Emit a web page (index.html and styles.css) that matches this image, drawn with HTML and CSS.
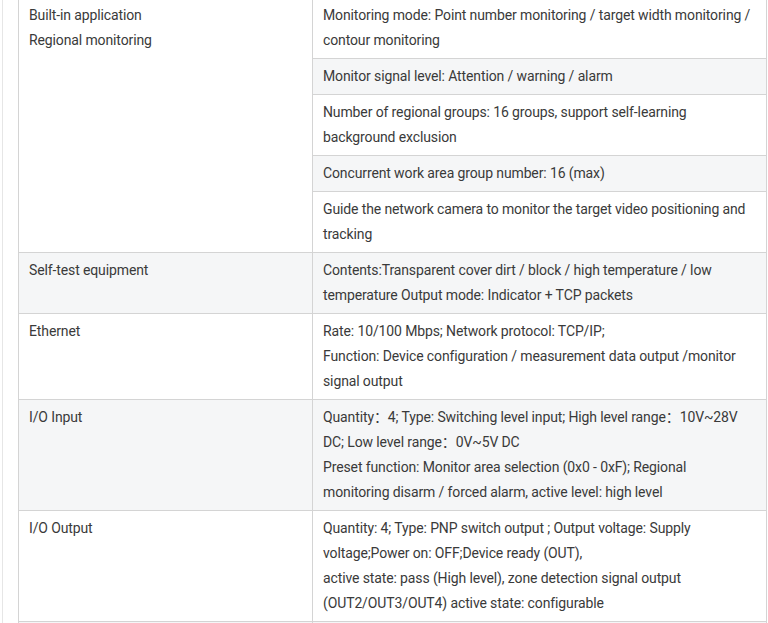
FILE: index.html
```html
<!DOCTYPE html>
<html>
<head>
<meta charset="utf-8">
<link rel="stylesheet" href="styles.css">
</head>
<body>
<div class="page">
  <table class="spec">
    <colgroup><col class="c1"><col class="c2"></colgroup>
    <tbody>
      <tr>
        <td rowspan="5">Built-in application<br>Regional monitoring</td>
        <td>Monitoring mode: Point number monitoring / target width monitoring / contour monitoring</td>
      </tr>
      <tr class="alt"><td>Monitor signal level: Attention / warning / alarm</td></tr>
      <tr><td>Number of regional groups: 16 groups, support self-learning background exclusion</td></tr>
      <tr class="alt"><td>Concurrent work area group number: 16 (max)</td></tr>
      <tr><td>Guide the network camera to monitor the target video positioning and tracking</td></tr>
      <tr class="alt">
        <td>Self-test equipment</td>
        <td>Contents:Transparent cover dirt / block / high temperature / low temperature Output mode: Indicator + TCP packets</td>
      </tr>
      <tr>
        <td>Ethernet</td>
        <td>Rate: 10/100 Mbps; Network protocol: TCP/IP;<br>Function: Device configuration / measurement data output /monitor signal output</td>
      </tr>
      <tr class="alt">
        <td>I/O Input</td>
        <td>Quantity：4; Type: Switching level input; High level range：10V~28V DC; Low level range：0V~5V DC<br>Preset function: Monitor area selection (0x0 - 0xF); Regional monitoring disarm / forced alarm, active level: high level</td>
      </tr>
      <tr>
        <td>I/O Output</td>
        <td>Quantity: 4; Type: PNP switch output ; Output voltage: Supply voltage;Power on: OFF;Device ready (OUT),<br>active state: pass (High level), zone detection signal output (OUT2/OUT3/OUT4) active state: configurable</td>
      </tr>
      <tr class="alt empty">
        <td></td>
        <td></td>
      </tr>
    </tbody>
  </table>
</div>
</body>
</html>
```
FILE: styles.css
```css
html, body {
  margin: 0;
  padding: 0;
  background: #ffffff;
  overflow: hidden;
}
.page {
  margin-left: 2px;
  border-left: 1px solid #e6e6e6;
  padding-left: 15px;
  height: 623px;
  overflow: hidden;
}
.spec {
  margin-top: -3px;
  border-collapse: collapse;
  table-layout: fixed;
  width: 749px;
  font-family: Roboto, "Noto Sans CJK SC", sans-serif;
  font-size: 14px;
  line-height: 25px;
  letter-spacing: -0.12px;
  color: #3a3a3a;
}
.c1 { width: 294px; }
.spec td {
  border: 1px solid #d4d4d4;
  padding: 5px 10px;
  vertical-align: top;
  text-align: left;
}
.spec tr.alt td {
  background: #f5f6f7;
}
.spec tr.empty td {
  height: 36px;
}
```
